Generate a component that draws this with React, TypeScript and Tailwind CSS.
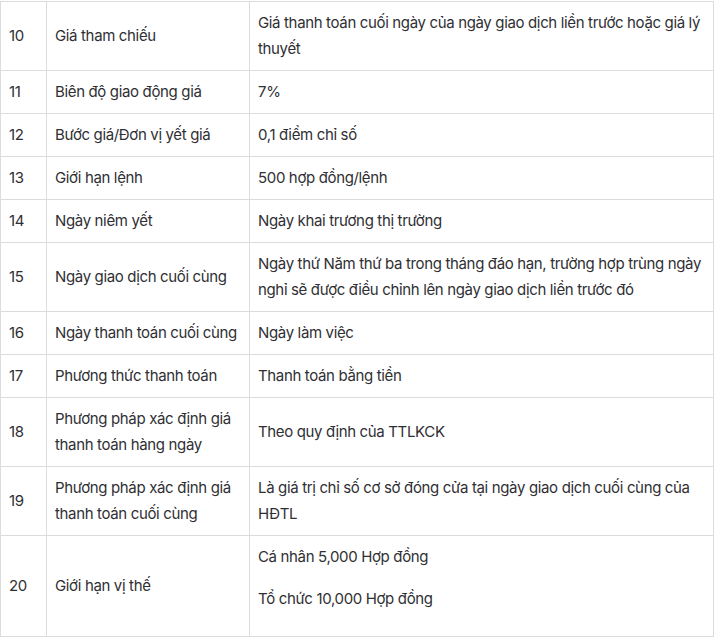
import React from "react";

type Row = {
  no: number;
  label: string;
  value: string[];
};

const rows: Row[] = [
  { no: 10, label: "Giá tham chiếu", value: ["Giá thanh toán cuối ngày của ngày giao dịch liền trước hoặc giá lý thuyết"] },
  { no: 11, label: "Biên độ giao động giá", value: ["7%"] },
  { no: 12, label: "Bước giá/Đơn vị yết giá", value: ["0,1 điểm chỉ số"] },
  { no: 13, label: "Giới hạn lệnh", value: ["500 hợp đồng/lệnh"] },
  { no: 14, label: "Ngày niêm yết", value: ["Ngày khai trương thị trường"] },
  {
    no: 15,
    label: "Ngày giao dịch cuối cùng",
    value: ["Ngày thứ Năm thứ ba trong tháng đáo hạn, trường hợp trùng ngày nghỉ sẽ được điều chỉnh lên ngày giao dịch liền trước đó"],
  },
  { no: 16, label: "Ngày thanh toán cuối cùng", value: ["Ngày làm việc"] },
  { no: 17, label: "Phương thức thanh toán", value: ["Thanh toán bằng tiền"] },
  { no: 18, label: "Phương pháp xác định giá thanh toán hàng ngày", value: ["Theo quy định của TTLKCK"] },
  {
    no: 19,
    label: "Phương pháp xác định giá thanh toán cuối cùng",
    value: ["Là giá trị chỉ số cơ sở đóng cửa tại ngày giao dịch cuối cùng của HĐTL"],
  },
  { no: 20, label: "Giới hạn vị thế", value: ["Cá nhân 5,000 Hợp đồng", "Tổ chức 10,000 Hợp đồng"] },
];

export default function App() {
  return (
    <div className="w-[718px] bg-white pt-px font-['Inter','Liberation_Sans',sans-serif] text-[15px] leading-[26px] tracking-[-0.35px] text-[#2f2f33]">
      <table className="w-[714px] border-collapse table-fixed">
        <colgroup>
          <col className="w-[46px]" />
          <col className="w-[203px]" />
          <col />
        </colgroup>
        <tbody>
          {rows.map((r) => (
            <tr key={r.no}>
              <td className="border border-[#dcdcdc] px-2 py-2 align-middle">{r.no}</td>
              <td className="border border-[#dcdcdc] px-2 py-2 align-middle">{r.label}</td>
              <td className="border border-[#dcdcdc] px-2 py-2 align-middle">
                {r.value.length > 1
                  ? r.value.map((v) => (
                      <p key={v} className="mb-4">
                        {v}
                      </p>
                    ))
                  : r.value[0]}
              </td>
            </tr>
          ))}
        </tbody>
      </table>
    </div>
  );
}
